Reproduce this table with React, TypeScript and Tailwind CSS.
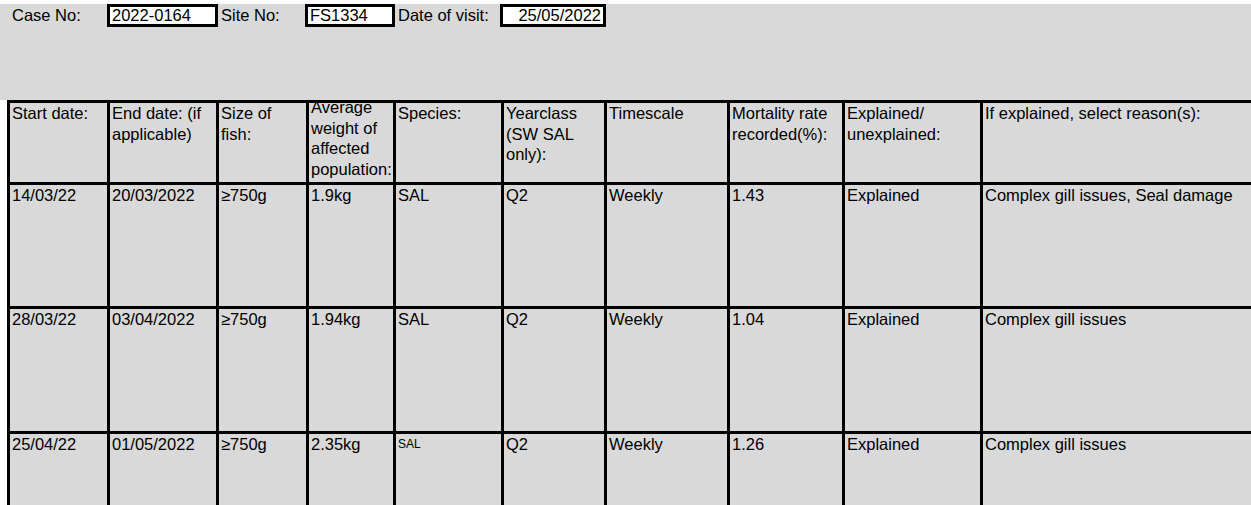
import React from "react";

const cols = "grid-cols-[97px_106px_87px_84px_105px_100px_120px_112px_135px_300px]";

const headers = [
  "Start date:",
  "End date: (if applicable)",
  "Size of fish:",
  "Average weight of affected population:",
  "Species:",
  "Yearclass (SW SAL only):",
  "Timescale",
  "Mortality rate recorded(%):",
  "Explained/ unexplained:",
  "If explained, select reason(s):",
];

const rows = [
  { h: "h-[121px]", cells: ["14/03/22", "20/03/2022", "≥750g", "1.9kg", "SAL", "Q2", "Weekly", "1.43", "Explained", "Complex gill issues, Seal damage"] },
  { h: "h-[122px]", cells: ["28/03/22", "03/04/2022", "≥750g", "1.94kg", "SAL", "Q2", "Weekly", "1.04", "Explained", "Complex gill issues"] },
  { h: "h-[100px]", cells: ["25/04/22", "01/05/2022", "≥750g", "2.35kg", "SAL", "Q2", "Weekly", "1.26", "Explained", "Complex gill issues"] },
];

function Field({ value, w, right }: { value: string; w: string; right?: boolean }) {
  return (
    <div className={`${w} h-[23px] border-[3px] border-black bg-white px-[2px] flex items-center ${right ? "justify-end" : ""}`}>
      {value}
    </div>
  );
}

export default function App() {
  return (
    <div className="w-[1251px] h-[505px] overflow-hidden bg-white text-black text-[16.5px] leading-[20.5px] font-['Liberation_Sans',Arial,sans-serif]">
      <div className="mt-[4px] h-[96px] bg-[#d9d9d9]">
        <div className="flex items-center h-[23px]">
          <span className="pl-[12px] w-[107px]">Case No:</span>
          <Field value="2022-0164" w="w-[111px]" />
          <span className="pl-[3px] w-[87px]">Site No:</span>
          <Field value="FS1334" w="w-[90px]" />
          <span className="pl-[3px] w-[105px]">Date of visit:</span>
          <Field value="25/05/2022" w="w-[106px]" right />
        </div>
      </div>

      {/* data table */}
      <div className="ml-[7px] w-[1300px] bg-black p-[3px] pr-0">
        <div className={`grid ${cols} gap-[3px]`}>
          {headers.map((t, i) => (
            <div key={i} className="h-[79px] bg-[#d9d9d9] overflow-hidden pl-[2px] pr-[3px]">
              <div className={i === 3 ? "-mt-[6px]" : ""}>{t}</div>
            </div>
          ))}
          {rows.map((r, ri) =>
            r.cells.map((c, ci) => (
              <div key={`${ri}-${ci}`} className={`${r.h} bg-[#d9d9d9] overflow-hidden pl-[2px] pr-[3px]`}>
                {ri === 2 && ci === 4 ? (
                  <span className="block text-[12px] leading-[13px] pt-[4px]">{c}</span>
                ) : (
                  c
                )}
              </div>
            ))
          )}
        </div>
      </div>
    </div>
  );
}
